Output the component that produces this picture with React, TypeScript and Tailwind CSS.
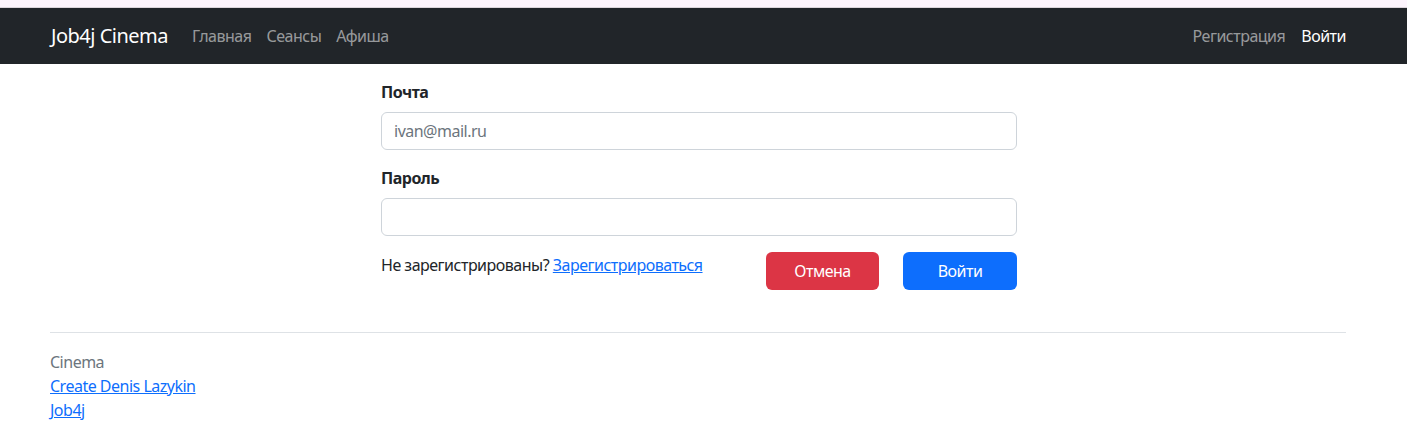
import React from "react";

export default function App() {
  return (
    <div className="min-h-[431px] bg-white text-[#212529] text-[16px] leading-[24px] tracking-[-0.5px]" style={{ fontFamily: '"Noto Sans", "Open Sans", sans-serif' }}>
      <div className="h-[8px] bg-[#fdf5fd] border-b border-[#dcd6dc]" />
      <nav className="h-[56px] bg-[#212529] flex items-center pl-[51px] pr-[61px]">
        <span className="text-[20px] leading-[30px] text-white mr-[24px]">Job4j Cinema</span>
        <div className="flex gap-[15px] text-[rgba(255,255,255,0.55)]">
          <span>Главная</span>
          <span>Сеансы</span>
          <span>Афиша</span>
        </div>
        <div className="ml-auto flex gap-[16px]">
          <span className="text-[rgba(255,255,255,0.55)]">Регистрация</span>
          <span className="text-white">Войти</span>
        </div>
      </nav>
      <main className="pt-[16px] pl-[381px]">
        <div className="w-[636px] flex flex-col">
          <label className="font-bold mb-[8px]">Почта</label>
          <div className="h-[38px] border border-[#ced4da] rounded-[6px] px-[12px] flex items-center text-[#6c757d] mb-[16px]">ivan@mail.ru</div>
          <label className="font-bold mb-[8px]">Пароль</label>
          <div className="h-[38px] border border-[#ced4da] rounded-[6px] mb-[16px]" />
          <div className="flex items-start">
            <div className="pt-[1px]">
              Не зарегистрированы?{" "}
              <a className="text-[#0d6efd] underline">Зарегистрироваться</a>
            </div>
            <div className="ml-auto flex gap-[24px]">
              <button className="w-[113px] h-[38px] rounded-[6px] bg-[#dc3545] text-white">Отмена</button>
              <button className="w-[114px] h-[38px] rounded-[6px] bg-[#0d6efd] text-white">Войти</button>
            </div>
          </div>
        </div>
      </main>
      <footer className="pl-[50px] pr-[61px] mt-[42px]">
        <div className="border-t border-[#dee2e6]" />
        <div className="pt-[17px] flex flex-col">
          <span className="text-[#6c757d]">Cinema</span>
          <a className="text-[#0d6efd] underline self-start">Create Denis Lazykin</a>
          <a className="text-[#0d6efd] underline self-start">Job4j</a>
        </div>
      </footer>
    </div>
  );
}
